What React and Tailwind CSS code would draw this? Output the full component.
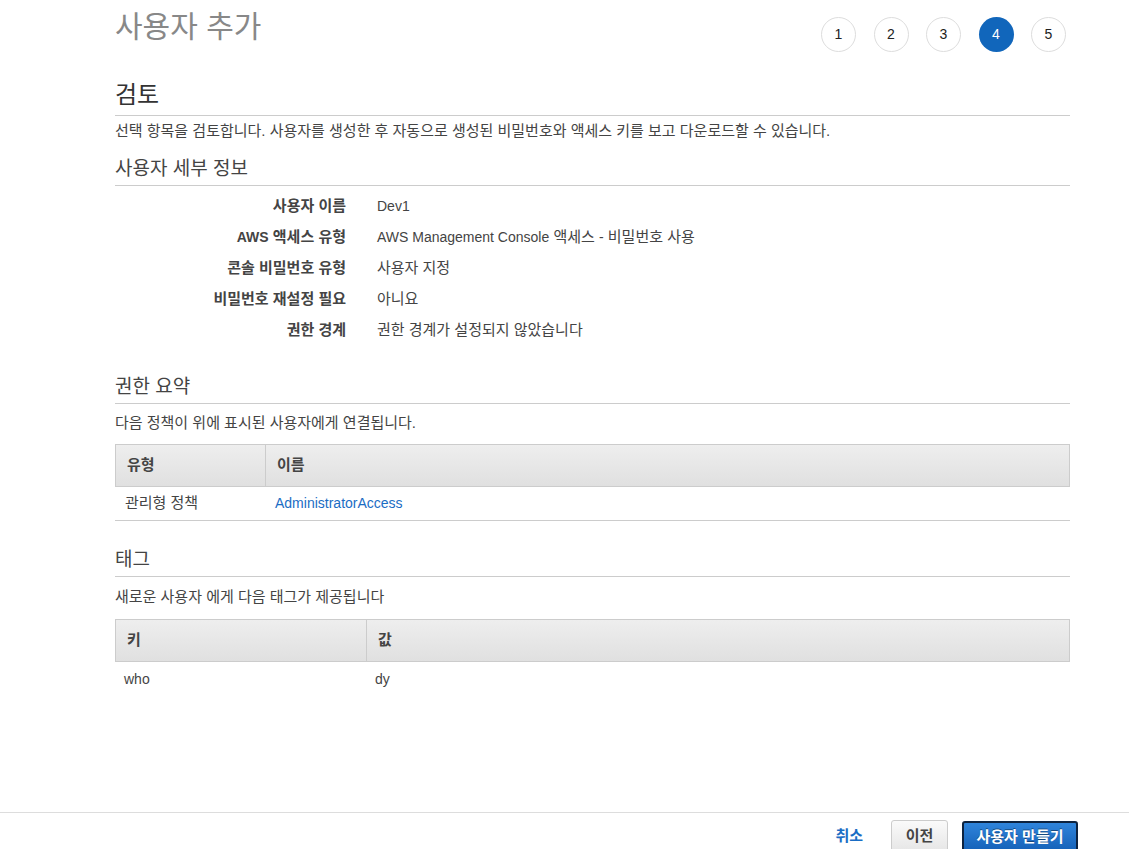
import React from 'react';

const font = { fontFamily: '"Liberation Sans", "Noto Sans CJK KR", sans-serif' };

// Latin runs are kept at 14px, Hangul at 15px to match the reference widths
const L = ({ children }) => <span className="text-[14px]">{children}</span>;

const details = [
  ['사용자 이름', <L>Dev1</L>],
  [<><L>AWS</L> 액세스 유형</>, <><L>AWS Management Console</L> 액세스 <L>-</L> 비밀번호 사용</>],
  ['콘솔 비밀번호 유형', '사용자 지정'],
  ['비밀번호 재설정 필요', '아니요'],
  ['권한 경계', '권한 경계가 설정되지 않았습니다'],
];

const Steps = () => (
  <div className="flex gap-[17.5px] pt-[17px] pr-[4px]">
    {[1, 2, 3, 4, 5].map((n) => (
      <div
        key={n}
        className={
          n === 4
            ? 'w-[35px] h-[35px] rounded-full bg-[#1166bb] text-white flex items-center justify-center text-[14px]'
            : 'w-[35px] h-[35px] rounded-full border border-[#dddddd] bg-white text-[#222] flex items-center justify-center text-[14px]'
        }
      >
        {n}
      </div>
    ))}
  </div>
);

const SectionTitle = ({ children }) => (
  <h3 className="text-[19px] leading-[24px] text-[#444] pb-[4px] border-b border-[#cccccc]">{children}</h3>
);

const HeadCell = ({ children, className = '' }) => (
  <div className={'h-[41px] flex items-center px-[11px] font-bold text-[15px] text-[#444] ' + className}>{children}</div>
);

export default function App() {
  return (
    <div style={font} className="h-[849px] overflow-hidden flex flex-col bg-white text-[#444] text-[15px]">
      <main className="flex-1 pl-[115px] pr-[59px]">
        <div className="flex justify-between h-[80px]">
          <h1 className="text-[30px] leading-[36px] mt-[9px] text-[#888]">사용자 추가</h1>
          <Steps />
        </div>

        <h2 className="text-[24px] leading-[30px] text-[#333] pb-[5px] border-b border-[#cccccc]">검토</h2>
        <p className="leading-[20px] mt-[5px]">
          선택 항목을 검토합니다. 사용자를 생성한 후 자동으로 생성된 비밀번호와 액세스 키를 보고 다운로드할 수 있습니다.
        </p>

        <div className="mt-[16px]">
          <SectionTitle>사용자 세부 정보</SectionTitle>
          <div className="grid grid-cols-[231px_1fr] gap-x-[31px] mt-[5px]">
            {details.map(([k, v], i) => (
              <React.Fragment key={i}>
                <div className="h-[31px] flex items-center justify-end font-bold text-[#444] whitespace-pre">{k}</div>
                <div className="h-[31px] flex items-center text-[#444] whitespace-pre">{v}</div>
              </React.Fragment>
            ))}
          </div>
        </div>

        <div className="mt-[29px]">
          <SectionTitle>권한 요약</SectionTitle>
          <p className="leading-[20px] mt-[9px]">다음 정책이 위에 표시된 사용자에게 연결됩니다.</p>
          <div className="mt-[11px]">
            <div className="grid grid-cols-[150px_1fr] border border-[#cccccc] bg-gradient-to-b from-[#eeeeee] to-[#e0e0e0]">
              <HeadCell className="border-r border-[#cccccc]">유형</HeadCell>
              <HeadCell>이름</HeadCell>
            </div>
            <div className="grid grid-cols-[150px_1fr] border-b border-[#cccccc] h-[34px] items-center">
              <div className="px-[10px]">관리형 정책</div>
              <div className="px-[10px] text-[14px] text-[#1a6dc4]">AdministratorAccess</div>
            </div>
          </div>
        </div>

        <div className="mt-[27px]">
          <SectionTitle>태그</SectionTitle>
          <p className="leading-[20px] mt-[10px]">새로운 사용자 에게 다음 태그가 제공됩니다</p>
          <div className="mt-[12px]">
            <div className="grid grid-cols-[251px_1fr] border border-[#cccccc] bg-gradient-to-b from-[#eeeeee] to-[#e0e0e0]">
              <HeadCell className="border-r border-[#cccccc]">키</HeadCell>
              <HeadCell>값</HeadCell>
            </div>
            <div className="grid grid-cols-[251px_1fr] h-[34px] items-center text-[14px]">
              <div className="px-[9px]">who</div>
              <div className="px-[9px]">dy</div>
            </div>
          </div>
        </div>
      </main>

      <footer className="h-[37px] shrink-0 border-t border-[#dddddd] flex justify-end items-start pt-[7px] pr-[51px]">
        <button className="h-[32px] px-[2px] mr-[26px] font-bold text-[15px] text-[#1a6dc4] leading-[30px]">취소</button>
        <button className="h-[32px] w-[57px] mr-[14px] rounded-[3px] border border-[#cccccc] bg-gradient-to-b from-[#fafafa] to-[#e6e6e6] font-bold text-[15px] text-[#444]">
          이전
        </button>
        <button className="h-[32px] w-[116px] mt-[1px] rounded-[3px] border-2 border-[#0d2340] bg-gradient-to-b from-[#2f84db] to-[#1461b8] font-bold text-[15px] text-white [text-shadow:0_-1px_0_rgba(0,0,0,0.4)]">
          사용자 만들기
        </button>
      </footer>
    </div>
  );
}
